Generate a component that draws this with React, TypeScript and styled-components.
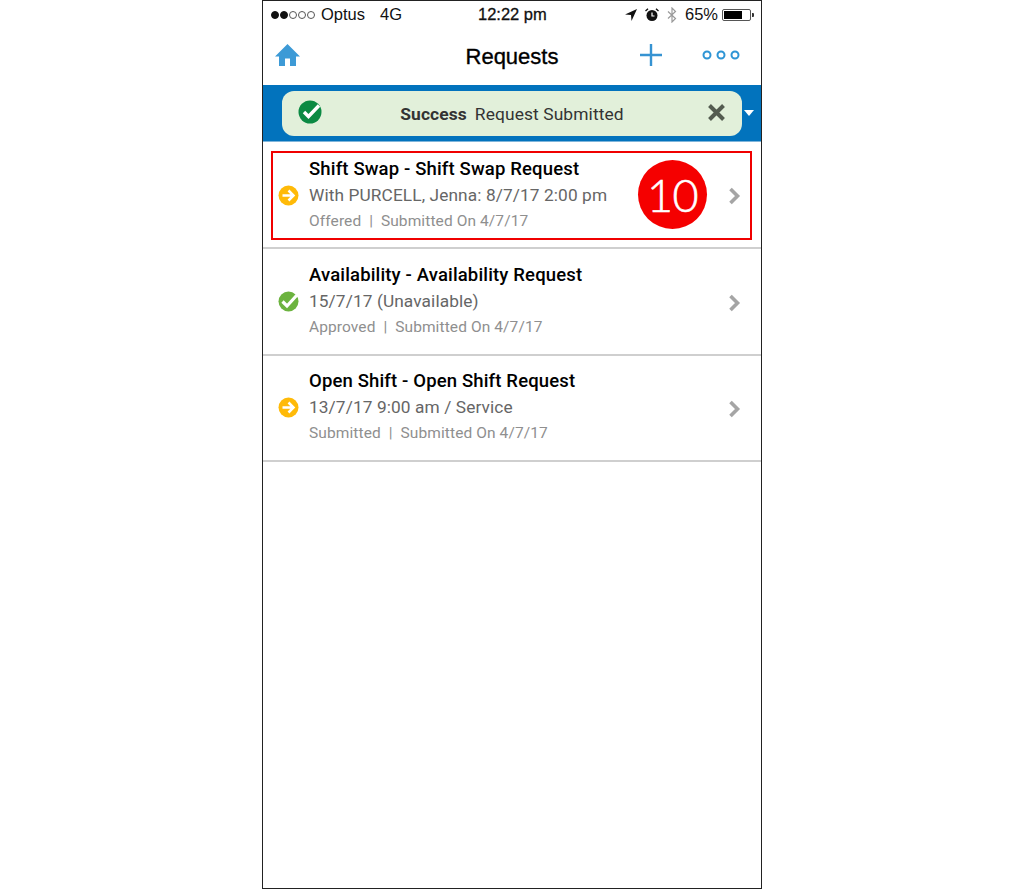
import React from "react";
import styled, { createGlobalStyle } from "styled-components";

const Global = createGlobalStyle`
  html, body { margin: 0; padding: 0; background: #fff; }
  body { font-family: Roboto, "Liberation Sans", sans-serif; }
`;

const Page = styled.div`
  width: 1024px;
  height: 889px;
  display: flex;
  justify-content: center;
  overflow: hidden;
`;

const Phone = styled.div`
  width: 500px;
  height: 889px;
  box-sizing: border-box;
  border: 1px solid #222;
  display: flex;
  flex-direction: column;
  background: #fff;
`;

const StatusBar = styled.div`
  height: 27px;
  display: flex;
  align-items: center;
  justify-content: space-between;
  padding: 0 7px 0 8px;
  font-family: "Liberation Sans", Arial, sans-serif;
  font-size: 16.5px;
  color: #111;
  position: relative;
`;

const StatusGroup = styled.div`
  display: flex;
  align-items: center;
`;

const Dot = styled.span<{ $on: boolean }>`
  width: 8px;
  height: 8px;
  box-sizing: border-box;
  border-radius: 50%;
  margin-right: 1px;
  border: 1px solid ${(p) => (p.$on ? "#111" : "#555")};
  background: ${(p) => (p.$on ? "#111" : "#fff")};
`;

const Carrier = styled.span`
  margin-left: 5px;
`;

const Network = styled.span`
  margin-left: 15px;
`;

const Clock = styled.span`
  position: absolute;
  left: 215px;
  -webkit-text-stroke: 0.3px #111;
`;

const StatusIcon = styled.svg`
  display: block;
  margin-right: 8px;
`;

const Battery = styled.div`
  width: 29px;
  height: 12px;
  margin-left: 4px;
  margin-right: 3px;
  box-sizing: border-box;
  border: 1px solid #555;
  border-radius: 2px;
  padding: 1px;
  position: relative;
  &::after {
    content: "";
    position: absolute;
    right: -4px;
    top: 3px;
    width: 2px;
    height: 4px;
    background: #333;
    border-radius: 0 1px 1px 0;
  }
`;

const BatteryFill = styled.div<{ $level: number }>`
  height: 100%;
  width: ${(p) => p.$level}%;
  background: #000;
`;

const NavBar = styled.div`
  height: 57px;
  display: grid;
  grid-template-columns: 1fr auto 1fr;
  align-items: center;
  padding: 0 12px 4px;
  box-sizing: border-box;
`;

const NavTitle = styled.div`
  font-family: "Liberation Sans", Arial, sans-serif;
  font-size: 22px;
  color: #000;
  margin-top: 4px;
  -webkit-text-stroke: 0.35px #000;
`;

const NavRight = styled.div`
  display: flex;
  justify-content: flex-end;
  align-items: center;
  gap: 40px;
  margin-right: 9px;
`;

const Banner = styled.div`
  height: 57px;
  background: #0273bd;
  box-sizing: border-box;
  padding: 6px 7px 5px 19px;
  display: flex;
  align-items: stretch;
  border-bottom: 1px solid #7fb5da;
`;

const Toast = styled.div`
  flex: 1;
  background: #e2f0da;
  border-radius: 12px;
  display: flex;
  align-items: center;
  justify-content: center;
  font-size: 17.4px;
  color: #333;
  position: relative;
  letter-spacing: 0.1px;
`;

const ToastIcon = styled.svg`
  position: absolute;
  left: 16px;
  top: 9px;
`;

const ToastClose = styled.svg`
  position: absolute;
  right: 17px;
  top: 13px;
`;

const ToastStrong = styled.strong`
  font-weight: 700;
  margin-right: 8px;
`;

const Caret = styled.div`
  align-self: center;
  width: 0;
  height: 0;
  margin-left: 2px;
  margin-top: -1px;
  border-left: 5px solid transparent;
  border-right: 5px solid transparent;
  border-top: 6px solid #fff;
`;

const List = styled.div`
  display: flex;
  flex-direction: column;
`;

const Row = styled.div<{ $height: number; $lift: number }>`
  position: relative;
  height: ${(p) => p.$height}px;
  box-sizing: border-box;
  display: flex;
  align-items: center;
  padding: 0 20px ${(p) => p.$lift}px 15px;
  border-bottom: 2px solid #cfcfcf;
`;

const RowIcon = styled.svg`
  flex: none;
  margin-top: 1px;
  overflow: visible;
`;

const RowText = styled.div`
  flex: 1;
  margin-left: 10px;
  display: flex;
  flex-direction: column;
`;

const RowTitle = styled.div`
  font-size: 18.5px;
  font-weight: 500;
  line-height: 26px;
  color: #000;
  letter-spacing: 0.15px;
`;

const RowDetail = styled.div`
  font-size: 17.3px;
  line-height: 27px;
  color: #666;
  letter-spacing: 0.1px;
`;

const RowMeta = styled.div`
  font-size: 15.5px;
  line-height: 25px;
  color: #8f8f8f;
  letter-spacing: 0.1px;
  white-space: pre;
`;

const Chevron = styled.svg`
  flex: none;
  margin-top: 3px;
`;

const Highlight = styled.div`
  position: absolute;
  left: 8px;
  right: 9px;
  top: 9px;
  height: 89px;
  box-sizing: border-box;
  border: 2px solid #f00000;
  pointer-events: none;
`;

const Badge = styled.div`
  position: absolute;
  left: 375px;
  top: 18px;
  width: 69px;
  height: 69px;
  border-radius: 50%;
  background: #f50000;
  color: #fff;
  font-family: Lato, "Open Sans", sans-serif;
  font-weight: 300;
  font-size: 45px;
  letter-spacing: -0.5px;
  -webkit-text-stroke: 0.6px #fff;
  display: flex;
  align-items: center;
  justify-content: center;
`;

const ArrowIcon = () => (
  <RowIcon width="21" height="21" viewBox="0 0 21 21">
    <circle cx="10.5" cy="10.5" r="10" fill="#ffba08" />
    <path d="M4.5 10.5H15M10.5 5.5L15.5 10.5L10.5 15.5" fill="none" stroke="#fff" strokeWidth="2.5" />
  </RowIcon>
);

const CheckIcon = () => (
  <RowIcon width="21" height="21" viewBox="0 0 21 21">
    <circle cx="10.5" cy="10.5" r="10" fill="#6cb33f" />
    <path d="M4.5 10.5L9 15L19 4" fill="none" stroke="#fff" strokeWidth="3.2" />
  </RowIcon>
);

const RowChevron = () => (
  <Chevron width="13" height="18" viewBox="0 0 13 18">
    <path d="M2.5 2L9.5 9L2.5 16" fill="none" stroke="#a5a5a5" strokeWidth="3.6" />
  </Chevron>
);

const rows = [
  { icon: <ArrowIcon />, height: 107, lift: 0, title: "Shift Swap - Shift Swap Request", detail: "With PURCELL, Jenna: 8/7/17 2:00 pm", meta: "Offered  |  Submitted On 4/7/17", marked: true },
  { icon: <CheckIcon />, height: 107, lift: 1, title: "Availability - Availability Request", detail: "15/7/17 (Unavailable)", meta: "Approved  |  Submitted On 4/7/17", marked: false },
  { icon: <ArrowIcon />, height: 106, lift: 2, title: "Open Shift - Open Shift Request", detail: "13/7/17 9:00 am / Service", meta: "Submitted  |  Submitted On 4/7/17", marked: false },
];

export default function App() {
  return (
    <Page>
      <Global />
      <Phone>
        <StatusBar>
          <StatusGroup>
            {[true, true, false, false, false].map((on, i) => (
              <Dot key={i} $on={on} />
            ))}
            <Carrier>Optus</Carrier>
            <Network>4G</Network>
          </StatusGroup>
          <Clock>12:22 pm</Clock>
          <StatusGroup>
            <StatusIcon width="12" height="12" viewBox="0 0 12 12">
              <path d="M12 0L0 5.5L6 6L6.5 12Z" fill="#111" />
            </StatusIcon>
            <StatusIcon width="14" height="14" viewBox="0 0 14 14">
              <circle cx="7" cy="7.5" r="5.5" fill="#111" />
              <path d="M7 4.5V8H9.5" fill="none" stroke="#fff" strokeWidth="1.2" />
              <path d="M0.5 3L3 0.8M13.5 3L11 0.8" stroke="#111" strokeWidth="1.4" />
            </StatusIcon>
            <StatusIcon width="10" height="16" viewBox="0 0 10 16">
              <path d="M1 4.5L8.5 11.5L5 15V1L8.5 4.5L1 11.5" fill="none" stroke="#9a9a9a" strokeWidth="1.2" />
            </StatusIcon>
            <span>65%</span>
            <Battery>
              <BatteryFill $level={70} />
            </Battery>
          </StatusGroup>
        </StatusBar>
        <NavBar>
          <svg width="25" height="22" viewBox="0 0 25 22">
            <path d="M12.5 0L25 12.5H21V22H15V14.5H10V22H4V12.5H0Z" fill="#3d9ad6" />
          </svg>
          <NavTitle>Requests</NavTitle>
          <NavRight>
            <svg width="22" height="22" viewBox="0 0 22 22">
              <path d="M11 0V22M0 11H22" stroke="#3693d2" strokeWidth="2.4" />
            </svg>
            <svg width="38" height="10" viewBox="0 0 38 10">
              <circle cx="5" cy="5" r="3.5" fill="none" stroke="#2e95d5" strokeWidth="2" />
              <circle cx="19" cy="5" r="3.5" fill="none" stroke="#2e95d5" strokeWidth="2" />
              <circle cx="33" cy="5" r="3.5" fill="none" stroke="#2e95d5" strokeWidth="2" />
            </svg>
          </NavRight>
        </NavBar>
        <Banner>
          <Toast>
            <ToastIcon width="24" height="24" viewBox="0 0 24 24">
              <circle cx="12" cy="12" r="11.5" fill="#0b8a43" />
              <path d="M6 12L10.5 16.5L21 5.5" fill="none" stroke="#fff" strokeWidth="3.4" />
            </ToastIcon>
            <ToastStrong>Success</ToastStrong>
            Request Submitted
            <ToastClose width="17" height="17" viewBox="0 0 17 17">
              <path d="M1.5 1.5L15.5 15.5M15.5 1.5L1.5 15.5" stroke="#545c50" strokeWidth="4" />
            </ToastClose>
          </Toast>
          <Caret />
        </Banner>
        <List>
          {rows.map((r) => (
            <Row key={r.title} $height={r.height} $lift={r.lift}>
              {r.icon}
              <RowText>
                <RowTitle>{r.title}</RowTitle>
                <RowDetail>{r.detail}</RowDetail>
                <RowMeta>{r.meta}</RowMeta>
              </RowText>
              <RowChevron />
              {r.marked && (
                <>
                  <Highlight />
                  <Badge>10</Badge>
                </>
              )}
            </Row>
          ))}
        </List>
      </Phone>
    </Page>
  );
}
